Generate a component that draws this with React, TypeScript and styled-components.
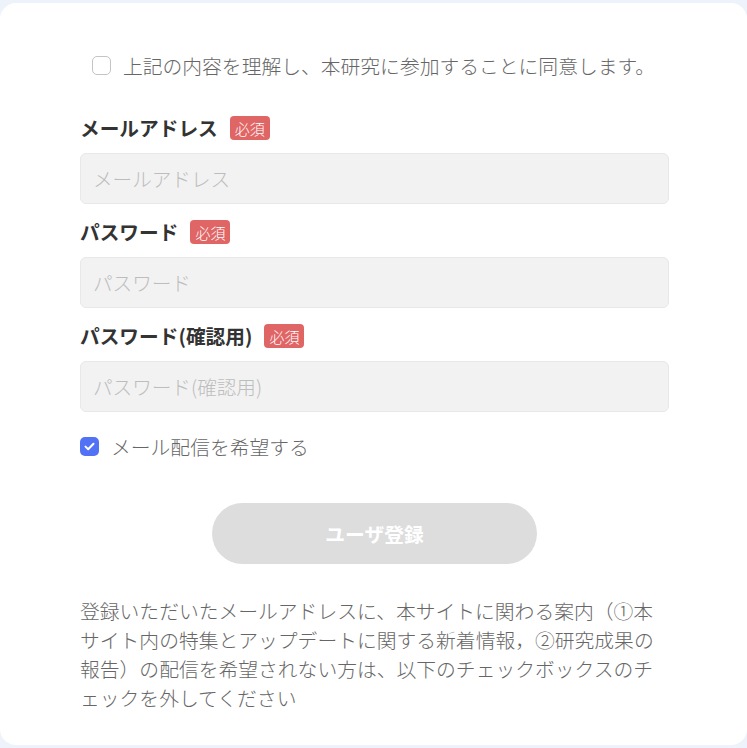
import React, { useState } from "react";
import styled, { createGlobalStyle } from "styled-components";

const Global = createGlobalStyle`
  html, body { margin: 0; padding: 0; background: #eef3fb; }
  body { font-family: "Noto Sans CJK JP", "Noto Sans", sans-serif; }
  * { box-sizing: border-box; }
`;

const Page = styled.div`
  padding: 3px 0 3px;
  background: #eef3fb;
`;

const Card = styled.div`
  background: #fff;
  border-radius: 16px;
  height: 742px;
  padding: 47px 78px 0 80px;
  display: flex;
  flex-direction: column;
`;

const CheckRow = styled.label<{ $center?: boolean }>`
  display: flex;
  align-items: center;
  justify-content: ${(p) => (p.$center ? "center" : "flex-start")};
  gap: 12px;
  height: 30px;
  font-size: 19.8px;
  font-weight: 300;
  color: #666;
  cursor: pointer;
  margin-left: ${(p) => (p.$center ? "-2px" : "0")};
`;

const Box = styled.span<{ $checked: boolean }>`
  width: 19px;
  height: 19px;
  border-radius: 5px;
  flex: none;
  display: flex;
  align-items: center;
  justify-content: center;
  border: ${(p) => (p.$checked ? "none" : "1.5px solid #c4c4c4")};
  background: ${(p) => (p.$checked ? "#5172f5" : "#fff")};
`;

const Fields = styled.div`
  margin-top: 36px;
  display: flex;
  flex-direction: column;
  gap: 16px;
`;

const Field = styled.div`
  display: flex;
  flex-direction: column;
  gap: 13px;
`;

const LabelRow = styled.div`
  display: flex;
  align-items: center;
  gap: 12px;
  height: 24px;
`;

const LabelText = styled.span`
  font-size: 19.7px;
  font-weight: 700;
  color: #333;
  margin-top: -2px;
`;

const Badge = styled.span`
  background: #e06565;
  color: #fff;
  font-size: 15px;
  font-weight: 300;
  border-radius: 4px;
  height: 24px;
  padding: 0 5px;
  display: inline-flex;
  align-items: center;
`;

const Input = styled.input`
  width: 100%;
  height: 51px;
  background: #f2f2f2;
  border: 1px solid #e8e8e8;
  border-radius: 6px;
  padding: 0 12px;
  font-family: inherit;
  font-size: 19.6px;
  font-weight: 300;
  color: #333;
  outline: none;
  &::placeholder { color: #bdbdbd; }
`;

const MailRow = styled.div`
  margin-top: 19px;
`;

const Button = styled.button`
  margin: 42px auto 0;
  width: 325px;
  height: 61px;
  border: none;
  border-radius: 31px;
  background: #dddddd;
  color: #fff;
  font-family: inherit;
  font-size: 19.8px;
  font-weight: 700;
`;

const Note = styled.p`
  margin: 32px 0 0;
  font-size: 19.8px;
  font-weight: 300;
  line-height: 29px;
  color: #666;
`;

const Check = () => (
  <svg width="11" height="9" viewBox="0 0 11 9" fill="none">
    <path d="M1.5 4.6 L4.2 7.2 L9.5 1.8" stroke="#fff" strokeWidth="2" strokeLinecap="round" strokeLinejoin="round" />
  </svg>
);

export default function App() {
  const [agree, setAgree] = useState(false);
  const [mail, setMail] = useState(true);
  const fields = [
    { label: "メールアドレス", ph: "メールアドレス" },
    { label: "パスワード", ph: "パスワード" },
    { label: "パスワード(確認用)", ph: "パスワード(確認用)" },
  ];
  return (
    <Page>
      <Global />
      <Card>
        <CheckRow $center onClick={() => setAgree(!agree)}>
          <Box $checked={agree}>{agree && <Check />}</Box>
          上記の内容を理解し、本研究に参加することに同意します。
        </CheckRow>
        <Fields>
          {fields.map((f) => (
            <Field key={f.label}>
              <LabelRow>
                <LabelText>{f.label}</LabelText>
                <Badge>必須</Badge>
              </LabelRow>
              <Input type="text" placeholder={f.ph} />
            </Field>
          ))}
        </Fields>
        <MailRow>
          <CheckRow onClick={() => setMail(!mail)}>
            <Box $checked={mail}>{mail && <Check />}</Box>
            メール配信を希望する
          </CheckRow>
        </MailRow>
        <Button>ユーザ登録</Button>
        <Note>
          登録いただいたメールアドレスに、本サイトに関わる案内（①本サイト内の特集とアップデートに関する新着情報，②研究成果の報告）の配信を希望されない方は、以下のチェックボックスのチェックを外してください
        </Note>
      </Card>
    </Page>
  );
}
